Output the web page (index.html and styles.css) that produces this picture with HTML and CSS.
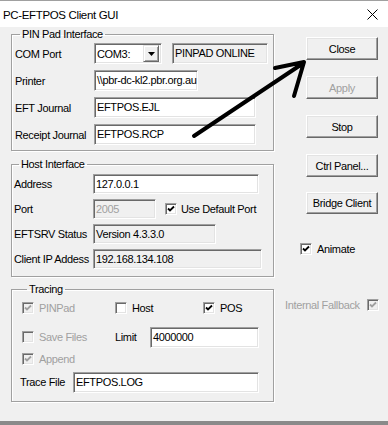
FILE: index.html
```html
<!DOCTYPE html>
<html lang="en">
<head>
  <meta charset="UTF-8" />
  <title>PC-EFTPOS Client GUI</title>
  <link rel="stylesheet" href="styles.css">
</head>
<body>
  <div class="window">
    <div class="titlebar">
      <span class="title">PC-EFTPOS Client GUI</span>
      <svg class="close-x" width="11" height="11" viewBox="0 0 11 11"><path d="M0.5 0.5 L10.5 10.5 M10.5 0.5 L0.5 10.5" stroke="#000" stroke-width="1" fill="none"/></svg>
    </div>

    <div class="client">
      <div class="left">
        <fieldset class="group pinpad">
          <legend>PIN Pad Interface</legend>
          <div class="rows">
            <span class="lbl">COM Port</span>
            <div class="line">
              <div class="combo">
                <span class="combo-text">COM3:</span>
                <span class="drop"><svg width="7" height="4" viewBox="0 0 7 4"><path d="M0 0 H7 L3.5 4 Z" fill="#000"/></svg></span>
              </div>
              <div class="field ro w-status">PINPAD ONLINE</div>
            </div>
            <span class="lbl">Printer</span>
            <div class="field w-printer">\\pbr-dc-kl2.pbr.org.au</div>
            <span class="lbl">EFT Journal</span>
            <div class="field w-journal">EFTPOS.EJL</div>
            <span class="lbl">Receipt Journal</span>
            <div class="field w-journal">EFTPOS.RCP</div>
          </div>
        </fieldset>

        <fieldset class="group host">
          <legend>Host Interface</legend>
          <div class="rows">
            <span class="lbl">Address</span>
            <div class="field w-address">127.0.0.1</div>
            <span class="lbl">Port</span>
            <div class="line">
              <div class="field ro disabled w-port">2005</div>
              <span class="check port-check">
                <span class="box"><svg width="8" height="8" viewBox="0 0 8 8"><path d="M1 3.5 L3 5.5 L7 1.5" stroke="#000" stroke-width="1.8" fill="none"/></svg></span>
                Use Default Port
              </span>
            </div>
            <span class="lbl">EFTSRV Status</span>
            <div class="field ro w-eftsrv">Version 4.3.3.0</div>
            <span class="lbl">Client IP Addess</span>
            <div class="field ro w-ip">192.168.134.108</div>
          </div>
        </fieldset>

        <fieldset class="group tracing">
          <legend>Tracing</legend>
          <div class="trace-row r1">
            <span class="check off col-a">
              <span class="box"><svg width="8" height="8" viewBox="0 0 8 8"><path d="M1 3.5 L3 5.5 L7 1.5" stroke="#a0a0a0" stroke-width="1.8" fill="none"/></svg></span>
              PINPad
            </span>
            <span class="check col-b">
              <span class="box"></span>
              Host
            </span>
            <span class="check">
              <span class="box"><svg width="8" height="8" viewBox="0 0 8 8"><path d="M1 3.5 L3 5.5 L7 1.5" stroke="#000" stroke-width="1.8" fill="none"/></svg></span>
              POS
            </span>
          </div>
          <div class="trace-row r2">
            <span class="check off col-a">
              <span class="box"></span>
              Save Files
            </span>
            <span class="lbl limit">Limit</span>
            <div class="field w-limit">4000000</div>
          </div>
          <div class="trace-row r3">
            <span class="check off col-a">
              <span class="box"><svg width="8" height="8" viewBox="0 0 8 8"><path d="M1 3.5 L3 5.5 L7 1.5" stroke="#a0a0a0" stroke-width="1.8" fill="none"/></svg></span>
              Append
            </span>
          </div>
          <div class="trace-row r4">
            <span class="lbl tracefile">Trace File</span>
            <div class="field w-tracefile">EFTPOS.LOG</div>
          </div>
        </fieldset>
      </div>

      <div class="right">
        <div class="btn">Close</div>
        <div class="btn disabled">Apply</div>
        <div class="btn">Stop</div>
        <div class="btn">Ctrl Panel...</div>
        <div class="btn short">Bridge Client</div>
        <span class="check animate">
          <span class="box"><svg width="8" height="8" viewBox="0 0 8 8"><path d="M1 3.5 L3 5.5 L7 1.5" stroke="#000" stroke-width="1.8" fill="none"/></svg></span>
          Animate
        </span>
        <span class="check off fallback">
          Internal Fallback
          <span class="box"><svg width="8" height="8" viewBox="0 0 8 8"><path d="M1 3.5 L3 5.5 L7 1.5" stroke="#a0a0a0" stroke-width="1.8" fill="none"/></svg></span>
        </span>
      </div>
    </div>

    <!-- hand-drawn annotation arrow over the dialog -->
    <svg class="arrow" width="388" height="425" viewBox="0 0 388 425">
      <path d="M194 136 L302 64 M275 68 L304 62 L294 96" stroke="#000" stroke-width="4" stroke-linecap="round" stroke-linejoin="round" fill="none"/>
    </svg>
  </div>
</body>
</html>
```

FILE: styles.css
```css
* {
  box-sizing: border-box;
}
body {
  margin: 0;
  font-family: 'Liberation Sans', Arial, sans-serif;
  font-size: 11px;
  letter-spacing: -0.35px;
  color: #000;
  background: #f0f0f0;
}
.window {
  position: relative;
  width: 388px;
  height: 425px;
  border-top: 1px solid #a0a0a0;
  border-bottom: 4px solid #8a8a8a;
  background: #f0f0f0;
  overflow: hidden;
}
.titlebar {
  height: 26px;
  background: #fff;
  display: flex;
  align-items: center;
  justify-content: space-between;
  padding: 1px 10px 0 3px;
}
.title {
  font-size: 11.5px;
}
.client {
  display: flex;
  padding-left: 11px;
}
.left {
  width: 263px;
}
.group {
  margin: 0;
  width: 263px;
  border: 1px solid #a0a0a0;
  box-shadow: inset 1px 1px 0 #fff, 1px 1px 0 #fff;
  min-width: 0;
}
.group legend {
  line-height: 13px;
  padding: 0 2px;
  margin-left: 5px;
}
.pinpad {
  margin-top: 1px;
  padding: 2px 3px 5px 3px;
}
.host {
  margin-top: 7px;
  padding: 3px 2px 7px 2px;
}
.tracing {
  margin-top: 6px;
  padding: 2px 0 9px 10px;
}
.rows {
  display: grid;
  grid-template-columns: 79px auto;
  align-items: center;
  justify-items: start;
}
.pinpad .rows {
  row-gap: 6px;
}
.host .rows {
  row-gap: 5px;
}
.lbl {
  white-space: nowrap;
}
.line {
  display: flex;
  align-items: center;
}
.field {
  height: 21px;
  background: #fff;
  border: 1px solid;
  border-color: #a0a0a0 #fff #fff #a0a0a0;
  box-shadow: inset 1px 1px 0 #696969, inset -1px -1px 0 #e3e3e3;
  padding: 0 2px;
  line-height: 19px;
  white-space: nowrap;
  overflow: hidden;
}
.host .field {
  height: 20px;
  line-height: 18px;
}
.field.ro {
  background: #f0f0f0;
}
.field.disabled {
  color: #a0a0a0;
}
.combo {
  width: 68px;
  height: 21px;
  background: #fff;
  border: 1px solid;
  border-color: #a0a0a0 #fff #fff #a0a0a0;
  box-shadow: inset 1px 1px 0 #696969, inset -1px -1px 0 #e3e3e3;
  display: flex;
  align-items: center;
  justify-content: space-between;
  padding: 0 2px 0 2px;
}
.drop {
  width: 16px;
  height: 17px;
  background: #f0f0f0;
  border: 1px solid;
  border-color: #e3e3e3 #696969 #696969 #e3e3e3;
  box-shadow: inset 1px 1px 0 #fff, inset -1px -1px 0 #a0a0a0;
  display: flex;
  align-items: center;
  justify-content: center;
}
.drop svg {
  display: block;
}
.w-status { width: 96px; margin-left: 10px; }
.w-printer { width: 104px; }
.w-journal { width: 162px; }
.w-address { width: 166px; }
.w-port { width: 63px; }
.w-eftsrv { width: 123px; }
.w-ip { width: 169px; }
.w-limit { width: 109px; }
.w-tracefile { width: 186px; }

.check {
  display: inline-flex;
  align-items: center;
  gap: 5px;
  white-space: nowrap;
}
.check .box {
  width: 12px;
  height: 12px;
  background: #fff;
  border: 1px solid;
  border-color: #a0a0a0 #fff #fff #a0a0a0;
  box-shadow: inset 1px 1px 0 #696969, inset -1px -1px 0 #e3e3e3;
  display: flex;
  align-items: center;
  justify-content: center;
  flex: none;
}
.check .box svg {
  display: block;
}
.check.off {
  color: #a0a0a0;
}
.check.off .box {
  background: #f0f0f0;
}
.port-check {
  margin-left: 9px;
  gap: 4px;
}
.trace-row {
  display: flex;
  align-items: center;
  height: 20px;
}
.r2 { margin-top: 9px; }
.r3 { margin-top: 2px; }
.r4 { margin-top: 3px; }
.col-a { width: 93px; }
.col-b { width: 88px; }
.limit {
  width: 35px;
}
.tracefile {
  width: 53px;
  margin-left: -2px;
}
.right {
  display: flex;
  flex-direction: column;
  align-items: flex-start;
  padding-top: 10px;
  margin-left: 11px;
}
.btn {
  width: 72px;
  height: 23px;
  margin-left: 21px;
  margin-bottom: 16px;
  background: #f0f0f0;
  border: 1px solid;
  border-color: #fff #696969 #696969 #fff;
  box-shadow: inset -1px -1px 0 #a0a0a0, inset 1px 1px 0 #e3e3e3;
  display: flex;
  align-items: center;
  justify-content: center;
  white-space: nowrap;
}
.btn.short {
  height: 22px;
  margin-top: -1px;
}
.btn.disabled {
  color: #a0a0a0;
}
.animate {
  margin-top: 13px;
  margin-left: 15px;
}
.fallback {
  margin-top: 44px;
  gap: 7px;
}
.arrow {
  position: absolute;
  top: -1px;
  left: 0;
  pointer-events: none;
}
```
